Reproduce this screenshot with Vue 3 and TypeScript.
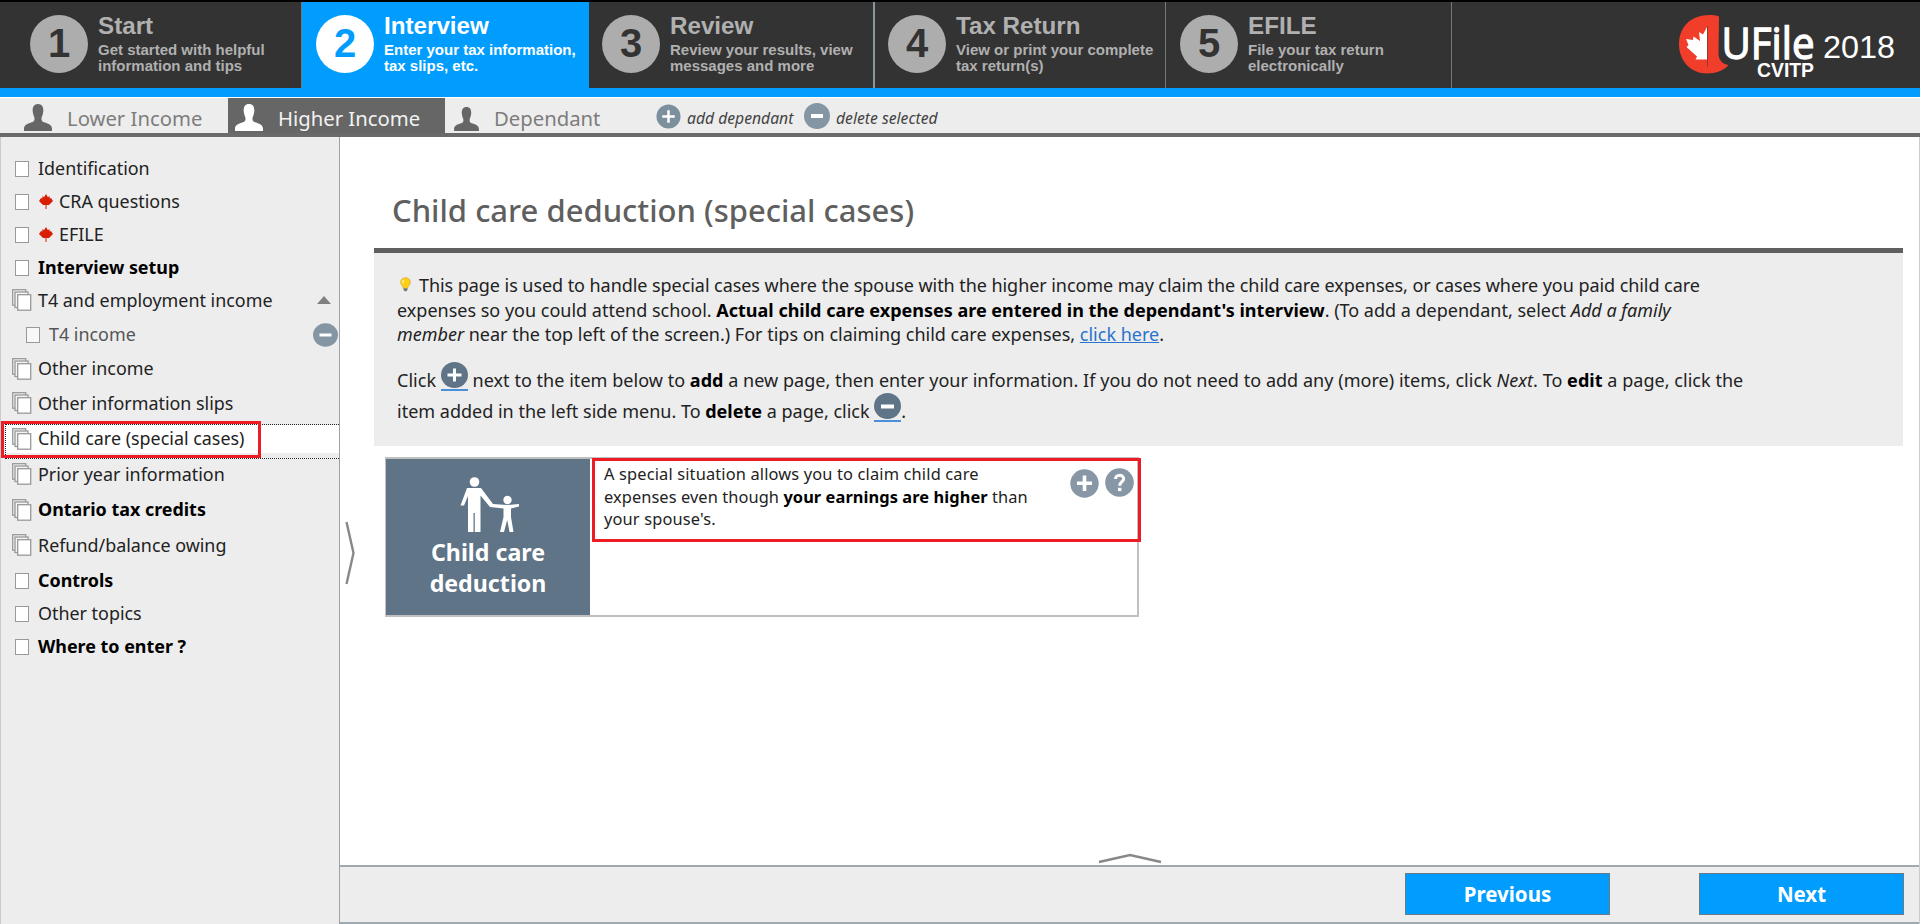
<script setup lang="ts">
interface Step { num: number; title: string; lines: string[]; cls: string }
interface Topic { label: string; icon: 'single' | 'stack'; height: number; bold?: boolean; leaf?: boolean; sub?: boolean; open?: boolean; active?: boolean }

const steps: Step[] = [
  { num: 1, title: 'Start', lines: ['Get started with helpful', 'information and tips'], cls: 's1' },
  { num: 2, title: 'Interview', lines: ['Enter your tax information,', 'tax slips, etc.'], cls: 's2 current' },
  { num: 3, title: 'Review', lines: ['Review your results, view', 'messages and more'], cls: 's3' },
  { num: 4, title: 'Tax Return', lines: ['View or print your complete', 'tax return(s)'], cls: 's4' },
  { num: 5, title: 'EFILE', lines: ['File your tax return', 'electronically'], cls: 's5' },
]

const people = [
  { name: 'Lower Income', cls: 'p1' },
  { name: 'Higher Income', cls: 'p2 selected' },
  { name: 'Dependant', cls: 'p3' },
]

const topics: Topic[] = [
  { label: 'Identification', icon: 'single', height: 33 },
  { label: 'CRA questions', icon: 'single', height: 33, leaf: true },
  { label: 'EFILE', icon: 'single', height: 33, leaf: true },
  { label: 'Interview setup', icon: 'single', height: 33, bold: true },
  { label: 'T4 and employment income', icon: 'stack', height: 33, open: true },
  { label: 'T4 income', icon: 'single', height: 35, sub: true },
  { label: 'Other income', icon: 'stack', height: 34 },
  { label: 'Other information slips', icon: 'stack', height: 35 },
  { label: 'Child care (special cases)', icon: 'stack', height: 36, active: true },
  { label: 'Prior year information', icon: 'stack', height: 35 },
  { label: 'Ontario tax credits', icon: 'stack', height: 36, bold: true },
  { label: 'Refund/balance owing', icon: 'stack', height: 35 },
  { label: 'Controls', icon: 'single', height: 35, bold: true },
  { label: 'Other topics', icon: 'single', height: 32 },
  { label: 'Where to enter ?', icon: 'single', height: 33, bold: true },
]
</script>

<template>
  <div class="page">
    <header class="top">
      <div v-for="s in steps" :key="s.num" class="step" :class="s.cls">
        <div class="num"><span>{{ s.num }}</span></div>
        <div class="info">
          <div class="title">{{ s.title }}</div>
          <div v-for="l in s.lines" :key="l" class="desc">{{ l }}</div>
        </div>
      </div>
      <svg class="logo" width="230" height="70" viewBox="0 0 230 70">
        <path d="M44 2.5C39 .8 33 .6 28 1.600C12 4.500 4 16 4 30C4 47 16 59.500 32 59.500C41 59.500 49 56.500 53.500 51C47 50 43.500 46 43.500 39Z" fill="#f03e2b" />
        <path d="M32.500 12L28 20.500L24 18L25 27L18.500 22.500L18 26L11 25L13.500 31L11.500 33L22 42.500L20.500 45.500L32.500 45.500Z" fill="#fff" />
        <path d="M32.500 12V52.500" stroke="#8d3a32" stroke-width="1" />
        <text x="46.500" y="45" font-size="43" textLength="93" lengthAdjust="spacingAndGlyphs" class="lg ufile">UFile</text>
        <text x="82" y="62.500" font-size="19.500" textLength="57" lengthAdjust="spacingAndGlyphs" class="lg cvitp">CVITP</text>
        <text x="148" y="44" font-size="32" textLength="72" lengthAdjust="spacingAndGlyphs" class="lg year">2018</text>
      </svg>
    </header>

    <nav class="people">
      <div v-for="p in people" :key="p.name" class="person" :class="p.cls">
        <svg class="head" width="28" height="27" viewBox="0 0 28 27">
          <path d="M14 0C18 0 19.500 3 19.300 7C19.200 10 18 12 17.500 14C17.300 16.500 18 17.500 20 18.300C25 20 28 21 28 25V27H0V25C0 21 3 20 8 18.300C10 17.500 10.700 16.500 10.500 14C10 12 8.800 10 8.700 7C8.500 3 10 0 14 0Z" fill="currentColor" />
        </svg>
        <span>{{ p.name }}</span>
      </div>
      <div class="act add">
        <svg width="25" height="25" viewBox="0 0 26 26"><circle cx="13" cy="13" r="12.500" fill="#7c8f9c" /><path d="M13 6.500V19.500M6.500 13H19.500" stroke="#fff" stroke-width="2.600" /></svg>
        <i>add dependant</i>
      </div>
      <div class="act del">
        <svg width="26" height="26" viewBox="0 0 26 26"><circle cx="13" cy="13" r="13" fill="#8496a3" /><path d="M7 13H19" stroke="#fff" stroke-width="4" /></svg>
        <i>delete selected</i>
      </div>
    </nav>

    <div class="body">
      <aside class="side">
        <div v-for="t in topics" :key="t.label" class="row" :class="{ bold: t.bold, sub: t.sub, active: t.active }" :style="{ height: t.height + 'px' }">
          <span v-if="t.icon === 'single'" class="box"></span>
          <svg v-else class="stack" width="20" height="22" viewBox="0 0 20 22">
            <g fill="#f4f4f4" stroke="#999" stroke-width="1.300">
              <rect x=".7" y=".7" width="13" height="15.500" /><rect x="3" y="3" width="13" height="15.500" /><rect x="5.700" y="5.700" width="13" height="15.500" fill="#fff" />
            </g>
          </svg>
          <svg v-if="t.leaf" class="leaf" width="14" height="15" viewBox="0 0 14 15">
            <path d="M7 0L8.800 3L10.800 2.300L10.500 4.500L12 4L14 7L10 11H7.500V15H6.500V11H4L0 7L2 4L3.500 4.500L3.200 2.300L5.200 3Z" fill="#d81e05" />
          </svg>
          <span class="label">{{ t.label }}</span>
          <svg v-if="t.open" class="end tri" width="14" height="8" viewBox="0 0 14 8"><path d="M0 8L7 0L14 8Z" fill="#808080" /></svg>
          <svg v-if="t.sub" class="end" width="25" height="24" viewBox="0 0 25 24"><ellipse cx="12.500" cy="12" rx="12.500" ry="11.700" fill="#8496a3" /><path d="M6.500 12H18.500" stroke="#fff" stroke-width="3" /></svg>
        </div>
      </aside>

      <div class="right">
        <main class="main">
          <svg class="expand" width="10" height="64" viewBox="0 0 10 64"><path d="M1.500 1L8.500 32L1.500 63" fill="none" stroke="#888" stroke-width="2.400" /></svg>
          <h1>Child care deduction (special cases)</h1>
          <section class="tip">
            <p class="first">
              <svg class="bulb" width="11" height="17" viewBox="0 0 13 17"><path d="M6.500 .5C2.500 .5 .8 3.500 .8 6C.8 9 3.800 10 4 13H9C9.200 10 12.200 9 12.200 6C12.200 3.500 10.500 .5 6.500 .5Z" fill="#fdd017" stroke="#d9a520" stroke-width=".8" /><path d="M4 2.500C2.500 4 2.500 6 3.500 8C4.500 6 5 4 4 2.500Z" fill="#fff6b0" /><path d="M4.200 13H8.800V15L7.500 16.500H5.500L4.200 15Z" fill="#777" /></svg>
              <span class="l1">This page is used to handle special cases where the spouse with the higher income may claim the child care expenses, or cases where you paid child care</span><br>
              <span class="l2">expenses so you could attend school. <b>Actual child care expenses are entered in the dependant's interview</b>. (To add a dependant, select <i>Add a family</i></span><br>
              <span class="l3"><i>member</i> near the top left of the screen.) For tips on claiming child care expenses, <a>click here</a>.</span>
            </p>
            <p class="second">
              <span class="l4">Click <span class="ic"><svg width="27" height="26" viewBox="0 0 27 26"><ellipse cx="13.500" cy="13" rx="13.500" ry="13" fill="#5f7487" /><path d="M13.500 6.500V19.500M6.500 13H20.500" stroke="#fff" stroke-width="3" /></svg></span> next to the item below to <b>add</b> a new page, then enter your information. If you do not need to add any (more) items, click <i>Next</i>. To <b>edit</b> a page, click the</span><br>
              <span class="l5">item added in the left side menu. To <b>delete</b> a page, click <span class="ic"><svg width="27" height="26" viewBox="0 0 27 26"><ellipse cx="13.500" cy="13" rx="13.500" ry="13" fill="#5f7487" /><path d="M7 13.500H20" stroke="#fff" stroke-width="4" /></svg></span>.</span>
            </p>
          </section>

          <section class="card">
            <div class="badge">
              <svg width="60" height="56" viewBox="0 0 60 56" fill="#fff">
                <circle cx="14.500" cy="5" r="4.800" />
                <path d="M7 11H21L33 27L47 28L59 27V29.500L51 31.500V40L53.500 55H49.500L47.200 43L44 55H40L43.500 40V31.500L30 30L20.500 18.500V55H14.800V36H13.500V55H8V19L4 28.500H0.500Z" />
                <circle cx="47.500" cy="23" r="4.200" />
              </svg>
              <div class="bt">Child care</div>
              <div class="bt">deduction</div>
            </div>
            <div class="situation">
              <p>
                <span class="c1">A special situation allows you to claim child care</span><br>
                <span class="c2">expenses even though <b>your earnings are higher</b> than</span><br>
                <span class="c3">your spouse's.</span>
              </p>
              <svg class="b1" width="29" height="29" viewBox="0 0 29 29"><circle cx="14.500" cy="14.500" r="14.200" fill="#8797a5" /><path d="M14.500 6.500V22M7 14.300H22" stroke="#fff" stroke-width="3.600" /></svg>
              <svg class="b2" width="29" height="29" viewBox="0 0 29 29"><circle cx="14.500" cy="14.500" r="14.300" fill="#8797a5" /><path d="M10.500 11C10.500 6.200 18.700 6.200 18.700 10.800C18.700 13.800 14.700 13.800 14.700 17.800" fill="none" stroke="#fff" stroke-width="3" /><rect x="13" y="19.800" width="3.400" height="3.300" fill="#fff" /></svg>
            </div>
          </section>
          <svg class="lift" width="64" height="11" viewBox="0 0 64 11"><path d="M1 9L32 2L63 9" fill="none" stroke="#888" stroke-width="2.400" /></svg>
        </main>
        <footer class="foot">
          <button class="prev">Previous</button>
          <button class="next">Next</button>
        </footer>
      </div>
    </div>
  </div>
</template>

<style>
body { margin: 0; background: #fff; }
</style>

<style scoped>
*, *::before, *::after { box-sizing: border-box; }
.page { width: 1920px; height: 924px; display: flex; flex-direction: column; overflow: hidden; font-family: "Noto Sans", "Open Sans", sans-serif; color: #222; background: #fff; }
.top { height: 97px; flex: none; display: flex; background: #333; border-top: 2px solid #000; border-bottom: 9px solid #009dff; font-family: "Liberation Sans", Arial, sans-serif; font-weight: bold; color: #b0b0b0; }
.step { height: 86px; display: flex; padding-top: 13px; border-right: 2px solid #6f7980; white-space: nowrap; }
.s1 { width: 302px; padding-left: 30px; border-right-width: 1px; }
.s2 { width: 287px; padding-left: 14px; border-right: 0; }
.s3 { width: 286px; padding-left: 13px; border-color: #8b979e; }
.s4 { width: 291px; padding-left: 13px; border-right-width: 1px; }
.s5 { width: 286px; padding-left: 14px; border-right-width: 1px; }
.num { width: 58px; height: 58px; border-radius: 50%; background: #adadad; color: #333; font-size: 40px; line-height: 56px; text-align: center; margin-right: 10px; flex: none; }
.title { font-size: 24.200px; line-height: 27px; height: 30px; margin-top: -3px; }
.desc { font-size: 15px; line-height: 16px; }
.current { background: #009dff; color: #fff; }
.current .num { background: #fff; color: #009dff; }
.logo { margin: 12px 15px 0 auto; }
.lg { fill: #fff; font-weight: normal; font-family: "Liberation Sans", Arial, sans-serif; }
.ufile { stroke: #fff; stroke-width: 1.300px; font-family: "Open Sans", sans-serif; }
.cvitp { font-weight: bold; }

.people { height: 39px; flex: none; margin-top: 1px; background: #ededed; border-bottom: 4px solid #6a6a6a; display: flex; }
.person { display: flex; align-items: flex-end; height: 35px; font-size: 20.300px; color: #7d7d7d; }
.person span { line-height: 40px; height: 35px; white-space: nowrap; }
.head { color: #666; margin-bottom: 2px; flex: none; }
.p1 { width: 228px; padding-left: 24px; }
.p1 .head { margin-right: 15px; }
.p2 { width: 217px; padding-left: 7px; }
.p2 .head { margin-right: 15px; }
.p3 { width: 211px; padding-left: 9px; }
.p3 .head { width: 25px; height: 24px; margin-right: 15px; }
.selected { background: #666; color: #f2f2f2; }
.selected .head { color: #fff; }
.act { display: flex; align-items: center; font-size: 15.700px; color: #444; white-space: nowrap; padding-top: 1px; }
.act i { line-height: 30px; padding-top: 3px; }
.add { width: 148px; gap: 6px; }
.del { gap: 6px; }

.body { flex: 1; min-height: 0; display: flex; }
.side { width: 340px; flex: none; background: #ededed; border-right: 1px solid #9aa3a9; border-left: 1px solid #ccc; padding-top: 15px; }
.row { position: relative; display: flex; align-items: center; padding-left: 14px; font-size: 17.900px; white-space: nowrap; }
.box { width: 14px; height: 16px; border: 1.500px solid #999; background: #fff; margin-right: 9px; flex: none; }
.stack { margin: -1px 6px 0 -3px; flex: none; }
.leaf { margin: 0 6px 0 1px; }
.label { line-height: 24px; position: relative; top: -1px; }
.bold { font-weight: bold; color: #000; }
.sub { padding-left: 25px; color: #555; }
.sub .box { background: #f8f8f8; }
.end { position: absolute; right: 1px; top: 6px; }
.end.tri { right: 8px; top: 12px; }
.active::before { content: ""; position: absolute; left: 4px; right: 0; top: 3px; height: 35px; border: 1.500px dotted #222; border-right: 0; background: linear-gradient(#fff 28px, #ededed 28px); }
.active::after { content: ""; position: absolute; left: 0; top: 0; width: 260px; height: 37px; border: 3px solid #ed1c24; }
.active .stack, .active .label { position: relative; z-index: 1; }

.right { flex: 1; display: flex; flex-direction: column; border-right: 1px solid #ccc; }
.main { flex: 1; position: relative; padding: 0 16px 0 34px; }
.expand { position: absolute; left: 5px; top: 384px; }
.lift { position: absolute; left: 758px; top: 716px; }
h1 { margin: 0 0 0 18px; font-size: 31px; font-weight: 500; color: #5f5f5f; line-height: 40px; padding: 53px 0 18px; white-space: nowrap; }
.tip { background: #ededed; border-top: 5px solid #5f5f5f; height: 198px; padding: 20px 0 0 23px; font-size: 18px; white-space: nowrap; }
.tip p { margin: 0; line-height: 24.500px; }
.bulb { vertical-align: -1px; margin: 0 8px 0 3px; }
.l1 { letter-spacing: -.06px; }
.l4 { letter-spacing: .04px; }
.tip .second { margin-top: 15px; line-height: 25.500px; }
.ic { display: inline-block; height: 29px; border-bottom: 2px solid #4a90d9; vertical-align: -4px; }
.ic svg { display: block; }
.tip b, .situation b { color: #000; }
.tip a { color: #2873cc; text-decoration: underline; }
.card { margin: 11px 0 0 11px; width: 754px; height: 160px; border: 2px solid #c0c0c0; border-left-width: 1px; display: flex; }
.badge { width: 204px; background: #5f7487; color: #fff; font-weight: bold; font-size: 23.200px; text-align: center; padding-top: 18px; flex: none; }
.badge svg { display: block; margin: 0 auto 4px 74px; }
.bt { line-height: 31px; }
.situation { position: relative; margin: -1px -4px 0 2px; flex: 1; height: 84px; border: 3px solid #ed1c24; font-size: 16.400px; letter-spacing: .15px; white-space: nowrap; }
.situation p { margin: 2px 0 0 9px; line-height: 22.700px; }
.c2 { letter-spacing: .08px; }
.b1 { position: absolute; left: 475px; top: 8px; }
.b2 { position: absolute; left: 510px; top: 7px; }
.foot { height: 59px; flex: none; background: #ededed; border-top: 2px solid #9fa9b0; border-bottom: 2px solid #9fa9b0; display: flex; align-items: center; justify-content: flex-end; padding: 0 15px 2px 0; }
button { height: 42px; width: 205px; padding: 0; background: #009dff; border: 1.500px solid #6b7a85; color: #fff; font: bold 20.500px "Noto Sans", sans-serif; }
.prev { margin-right: 89px; }
</style>
